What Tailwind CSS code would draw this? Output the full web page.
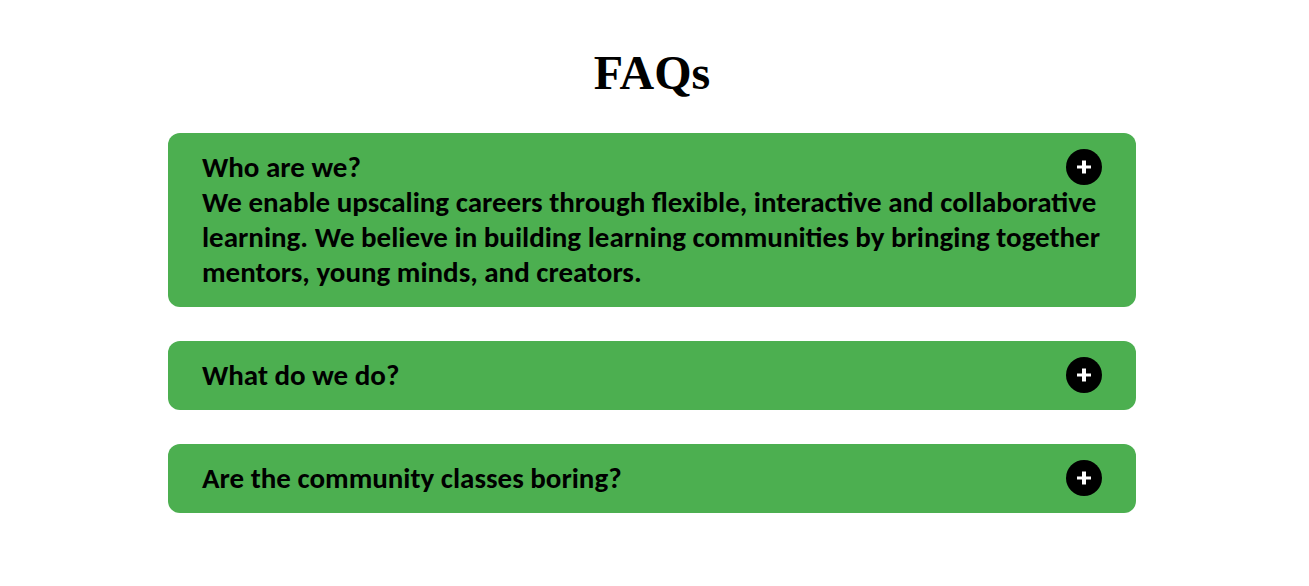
<!DOCTYPE html>
<html lang="en">
<head>
<meta charset="utf-8">
<meta name="viewport" content="width=device-width, initial-scale=1">
<title>FAQs</title>
<script src="https://cdn.jsdelivr.net/npm/@tailwindcss/browser@4"></script>
</head>
<body class="bg-white pr-[5px] text-black">
<main class="mx-auto w-full max-w-[968px] pt-[45px] pb-16">
  <h1 class="text-center font-['Liberation_Serif',serif] text-5xl leading-[56px] font-bold">FAQs</h1>
  <div class="mt-8 flex flex-col gap-[34px] font-[Calibri,Carlito,Lato,'Open_Sans',sans-serif] text-[29px] leading-[35px] font-bold">
    <section class="rounded-xl bg-[#4caf50] px-[34px] pt-4 pb-[17px]">
      <div class="flex items-end justify-between">
        <h2 id="q1">Who are we?</h2>
        <button type="button" aria-labelledby="q1" aria-expanded="true" aria-controls="a1" class="flex size-9 items-center justify-center rounded-full bg-black text-white">
          <svg class="size-4" viewBox="0 0 16 16" fill="none" stroke="currentColor" aria-hidden="true"><path d="M8 1.5v13" stroke-width="4"/><path d="M1 8h14" stroke-width="3"/></svg>
        </button>
      </div>
      <p id="a1">We enable upscaling careers through flexible, interactive and collaborative learning. We believe in building learning communities by bringing together mentors, young minds, and creators.</p>
    </section>
    <section class="flex items-end justify-between rounded-xl bg-[#4caf50] px-[34px] pt-4 pb-[17px]">
      <h2 id="q2">What do we do?</h2>
      <button type="button" aria-labelledby="q2" aria-expanded="false" class="flex size-9 items-center justify-center rounded-full bg-black text-white">
        <svg class="size-4" viewBox="0 0 16 16" fill="none" stroke="currentColor" aria-hidden="true"><path d="M8 1.5v13" stroke-width="4"/><path d="M1 8h14" stroke-width="3"/></svg>
      </button>
    </section>
    <section class="flex items-end justify-between rounded-xl bg-[#4caf50] px-[34px] pt-4 pb-[17px]">
      <h2 id="q3">Are the community classes boring?</h2>
      <button type="button" aria-labelledby="q3" aria-expanded="false" class="flex size-9 items-center justify-center rounded-full bg-black text-white">
        <svg class="size-4" viewBox="0 0 16 16" fill="none" stroke="currentColor" aria-hidden="true"><path d="M8 1.5v13" stroke-width="4"/><path d="M1 8h14" stroke-width="3"/></svg>
      </button>
    </section>
  </div>
</main>
</body>
</html>
